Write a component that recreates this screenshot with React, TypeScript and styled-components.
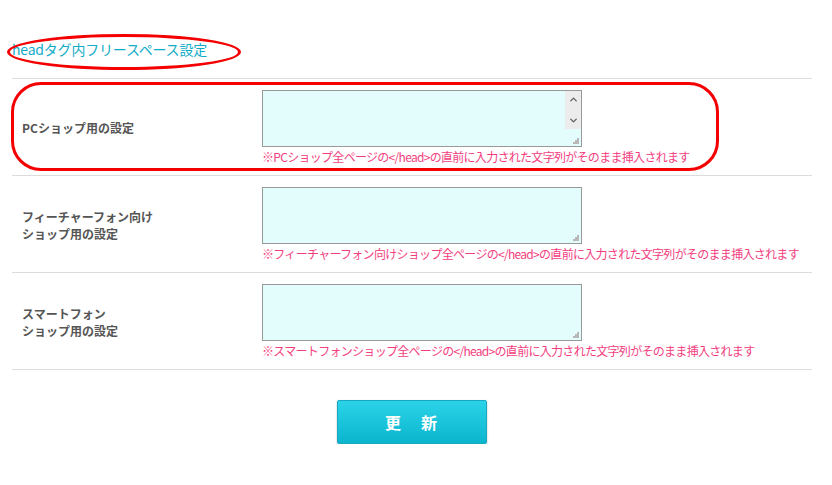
import styled, { createGlobalStyle } from "styled-components";
import { ChevronUp, ChevronDown } from "lucide-react";

const GlobalStyle = createGlobalStyle`
  body {
    margin: 0;
    background: #fff;
    font-family: "Noto Sans CJK JP", "DejaVu Sans", sans-serif;
  }
`;

type Setting = {
  id: string;
  label: string[];
  note: string;
  scroll?: boolean;
};

const settings: Setting[] = [
  {
    id: "pc",
    label: ["PCショップ用の設定"],
    note: "※PCショップ全ページの</head>の直前に入力された文字列がそのまま挿入されます",
    scroll: true,
  },
  {
    id: "fp",
    label: ["フィーチャーフォン向け", "ショップ用の設定"],
    note: "※フィーチャーフォン向けショップ全ページの</head>の直前に入力された文字列がそのまま挿入されます",
  },
  {
    id: "sp",
    label: ["スマートフォン", "ショップ用の設定"],
    note: "※スマートフォンショップ全ページの</head>の直前に入力された文字列がそのまま挿入されます",
  },
];

const Grip = () => (
  <GripIcon width="7" height="7" viewBox="0 0 7 7">
    <rect x="5" y="1" width="2" height="2" />
    <rect x="3" y="3" width="2" height="2" />
    <rect x="5" y="3" width="2" height="2" />
    <rect x="1" y="5" width="2" height="2" />
    <rect x="3" y="5" width="2" height="2" />
    <rect x="5" y="5" width="2" height="2" />
  </GripIcon>
);

const App = () => (
  <>
    <GlobalStyle />
    <Page>
      <Heading>headタグ内フリースペース設定</Heading>
      <HeadingMark />
      <RowMark />
      <Form>
        {settings.map((s) => (
          <Row key={s.id}>
            <Label>
              {s.label.map((line) => (
                <span key={line}>{line}</span>
              ))}
            </Label>
            <Field>
              <AreaWrap>
                <TextArea />
                {s.scroll && (
                  <ScrollStrip>
                    <ChevronUp size={11} strokeWidth={3} />
                    <ChevronDown size={11} strokeWidth={3} />
                  </ScrollStrip>
                )}
                <Grip />
              </AreaWrap>
              <Note>{s.note}</Note>
            </Field>
          </Row>
        ))}
      </Form>
      <Actions>
        <SubmitButton>更　新</SubmitButton>
      </Actions>
    </Page>
  </>
);

export default App;

const Page = styled.div`
  position: relative;
  width: 800px;
  padding: 40px 0 0 12px;
`;

const Heading = styled.h2`
  margin: 0 0 20px;
  font-size: 14px;
  line-height: 18px;
  font-weight: normal;
  color: #12acc9;
  letter-spacing: -0.2px;
`;

const HeadingMark = styled.div`
  position: absolute;
  left: 7px;
  top: 34px;
  width: 228px;
  height: 30px;
  border: 3px solid #f40000;
  border-radius: 50%;
  pointer-events: none;
`;

const RowMark = styled.div`
  position: absolute;
  left: 11px;
  top: 82px;
  width: 702px;
  height: 83px;
  border: 3px solid #f40000;
  border-radius: 30px;
  pointer-events: none;
`;

const Form = styled.div`
  border-bottom: 1px solid #dcdcdc;
`;

const Row = styled.div`
  display: grid;
  grid-template-columns: 250px 1fr;
  align-items: center;
  border-top: 1px solid #dcdcdc;
  padding: 11px 0 10px;
`;

const Label = styled.div`
  display: flex;
  flex-direction: column;
  padding-left: 10px;
  font-size: 12px;
  line-height: 17px;
  font-weight: bold;
  color: #555;
`;

const Field = styled.div`
  display: flex;
  flex-direction: column;
`;

const AreaWrap = styled.div`
  position: relative;
  width: 320px;
  height: 57px;
`;

const TextArea = styled.textarea`
  display: block;
  box-sizing: border-box;
  width: 100%;
  height: 100%;
  margin: 0;
  border: 1px solid #999;
  background: #e3fdfd;
  resize: none;
  font-family: inherit;
`;

const ScrollStrip = styled.div`
  position: absolute;
  top: 1px;
  right: 1px;
  width: 16px;
  height: 38px;
  background: #ececec;
  display: flex;
  flex-direction: column;
  align-items: center;
  justify-content: space-between;
  padding: 3px 0;
  box-sizing: border-box;
  color: #606060;
`;

const GripIcon = styled.svg`
  position: absolute;
  right: 3px;
  bottom: 3px;
  fill: #b8b8b8;
`;

const Note = styled.div`
  margin-top: 2px;
  font-size: 12px;
  line-height: 16px;
  color: #f23e80;
  letter-spacing: -0.7px;
  white-space: nowrap;
`;

const Actions = styled.div`
  display: flex;
  justify-content: center;
  padding-top: 30px;
`;

const SubmitButton = styled.button`
  width: 150px;
  height: 44px;
  border: 1px solid #19a8c0;
  border-radius: 2px;
  background: linear-gradient(#2ad3e7, #0bb5cd);
  box-shadow: 0 1px 2px rgba(0, 0, 0, 0.3);
  color: #fff;
  font-family: inherit;
  font-size: 16px;
  font-weight: bold;
  letter-spacing: 2px;
  cursor: pointer;
`;
